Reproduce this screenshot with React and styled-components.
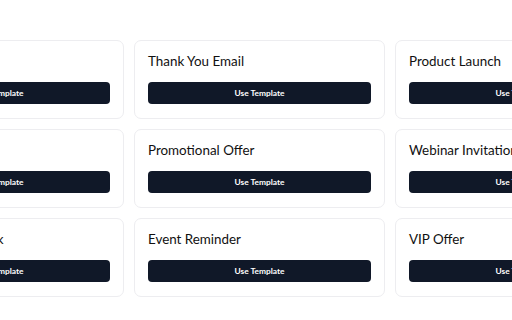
import React from "react";
import styled, { createGlobalStyle } from "styled-components";

const Global = createGlobalStyle`
  html, body { margin: 0; padding: 0; background: #ffffff; overflow: hidden; }
  body { font-family: Lato, "Noto Sans", sans-serif; }
`;

const Page = styled.div`
  width: 512px;
  height: 320px;
  display: flex;
  justify-content: center;
  padding: 40px 0 0 7px;
  box-sizing: border-box;
  overflow: hidden;
`;

const Grid = styled.div`
  display: grid;
  grid-template-columns: repeat(3, 251px);
  column-gap: 10px;
  row-gap: 10px;
  flex: none;
  align-content: start;
`;

const Card = styled.div`
  box-sizing: border-box;
  border: 1px solid #ededf0;
  border-radius: 7px;
  background: #ffffff;
  padding: 12px 13px 14px;
  display: flex;
  flex-direction: column;
  gap: 12px;
`;

const Title = styled.div`
  font-size: 13.4px;
  line-height: 17px;
  color: #111111;
  white-space: nowrap;
`;

const Button = styled.button`
  height: 22px;
  width: 100%;
  border: none;
  border-radius: 4px;
  background: #101828;
  color: #ffffff;
  font-family: Lato, "Noto Sans", sans-serif;
  font-weight: 700;
  font-size: 8.4px;
  cursor: pointer;
  padding: 0;
`;

const titles = [
  "Welcome Email", "Thank You Email", "Product Launch",
  "Newsletter", "Promotional Offer", "Webinar Invitation",
  "Customer Feedback", "Event Reminder", "VIP Offer",
];

export default function App() {
  return (
    <>
      <Global />
      <Page>
        <Grid>
          {titles.map((t) => (
            <Card key={t}>
              <Title>{t}</Title>
              <Button>Use Template</Button>
            </Card>
          ))}
        </Grid>
      </Page>
    </>
  );
}
